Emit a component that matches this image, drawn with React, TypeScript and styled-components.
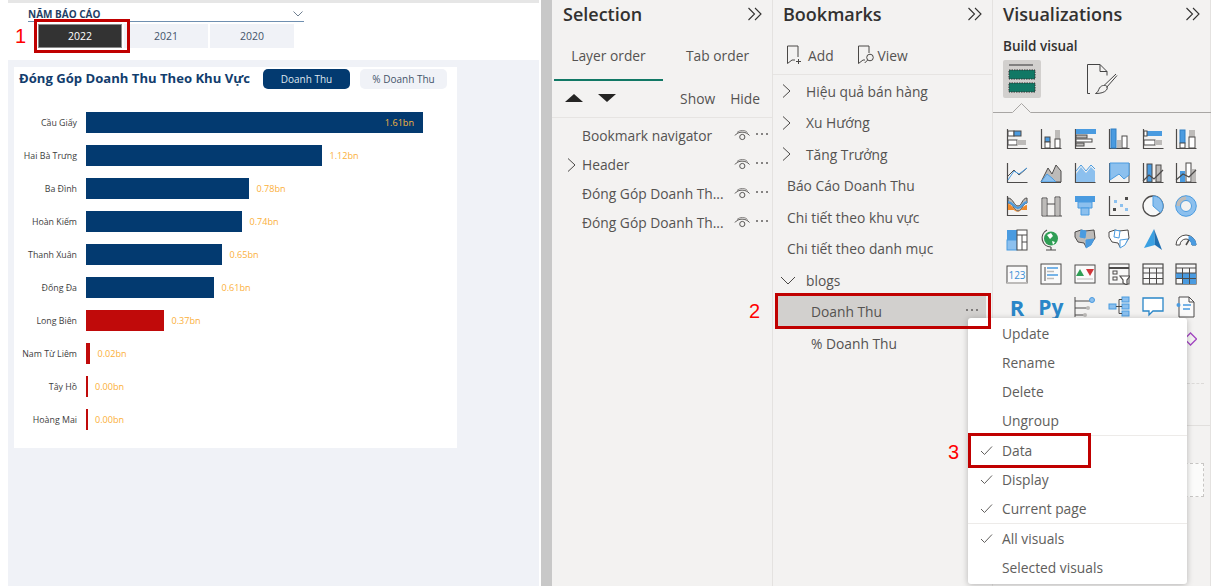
import React from 'react';
import styled, { createGlobalStyle } from 'styled-components';

const GlobalStyle = createGlobalStyle`
  html, body {
    margin: 0;
    padding: 0;
    background: #fff;
    font-family: "Open Sans", "Liberation Sans", sans-serif;
  }
  * { box-sizing: border-box; }
`;

const Page = styled.div`
  position: relative;
  width: 1211px;
  height: 586px;
  overflow: hidden;
  display: flex;
  background: #fff;
`;

/* ---------- report side ---------- */

const Report = styled.div`
  width: 541px;
  height: 586px;
  padding: 0 2px 0 8px;
  display: flex;
  flex-direction: column;
  flex-shrink: 0;
`;

const TopBand = styled.div`
  height: 3px;
  background: #e6e6e6;
`;

const SlicerBand = styled.div`
  height: 57px;
  padding: 5px 0 0 20px;
`;

const SlicerHead = styled.div`
  width: 276px;
  height: 14px;
  display: flex;
  justify-content: space-between;
  align-items: center;
  border-bottom: 1px solid #6f8fb0;
  color: #1f3f66;
  font-size: 10px;
  font-weight: 700;
  line-height: 12px;
  padding: 0 1px 2px 0;
`;

const YearRow = styled.div`
  display: flex;
  gap: 2px;
  margin: 2px 0 0 10px;
`;

const YearButton = styled.div<{ $on?: boolean }>`
  width: 84px;
  height: 24px;
  display: flex;
  align-items: center;
  justify-content: center;
  font-size: 10.5px;
  padding-bottom: 1px;
  color: ${(p) => (p.$on ? '#fff' : '#44546a')};
  background: ${(p) => (p.$on ? '#333' : '#f0f2f7')};
  border: ${(p) => (p.$on ? '1px solid #8a8a8a' : 'none')};
`;

const Canvas = styled.div`
  flex: 1;
  background: #f0f2f7;
  padding: 7px 0 0 6px;
`;

const ChartCard = styled.div`
  width: 443px;
  height: 381px;
  background: #fff;
`;

const ChartHead = styled.div`
  height: 39px;
  display: flex;
  align-items: flex-start;
  padding: 2px 0 0 5px;
`;

const ChartTitle = styled.div`
  width: 244px;
  color: #123d6d;
  font-size: 13.1px;
  font-weight: 700;
  line-height: 18px;
  white-space: nowrap;
`;

const Pill = styled.div<{ $on?: boolean }>`
  width: 87px;
  height: 20px;
  margin-right: 10px;
  border-radius: 5px;
  display: flex;
  align-items: center;
  justify-content: center;
  font-size: 10px;
  color: ${(p) => (p.$on ? '#dfe6ef' : '#44546a')};
  background: ${(p) => (p.$on ? '#033a70' : '#f0f2f7')};
`;

const BarList = styled.div`
  display: grid;
  row-gap: 12px;
  margin-top: 6px;
`;

const BarRow = styled.div`
  height: 21px;
  display: flex;
  align-items: center;
`;

const BarLabel = styled.div`
  width: 63px;
  margin-right: 9px;
  display: flex;
  justify-content: flex-end;
  color: #3d3d3d;
  font-size: 8.8px;
  white-space: nowrap;
`;

const Bar = styled.div<{ $red?: boolean; $inside?: boolean }>`
  height: 21px;
  flex-shrink: 0;
  background: ${(p) => (p.$red ? '#c00a0a' : '#033a70')};
  display: flex;
  align-items: center;
  justify-content: flex-end;
  padding-right: ${(p) => (p.$inside ? 9 : 0)}px;
`;

const BarValue = styled.span<{ $inside?: boolean }>`
  color: ${(p) => (p.$inside ? '#f5b63f' : '#fbb03b')};
  font-size: 9.1px;
  margin-left: ${(p) => (p.$inside ? 0 : 7.5)}px;
`;

const Gutter = styled.div`
  width: 11px;
  background: #c8c8c8;
  flex-shrink: 0;
`;

/* ---------- panes ---------- */

const Pane = styled.div<{ $w: number }>`
  width: ${(p) => p.$w}px;
  height: 586px;
  flex-shrink: 0;
  background: #f3f2f1;
  border-right: 1px solid #e4e2e0;
  color: #555351;
  font-size: 13.8px;
`;

const PaneHead = styled.div<{ $pad: number }>`
  height: 28px;
  padding: 0 9px 0 ${(p) => p.$pad}px;
  display: flex;
  align-items: center;
  justify-content: space-between;
`;

const PaneTitle = styled.div`
  color: #323130;
  font-size: 18px;
  font-weight: 600;
  line-height: 28px;
`;

const TabBar = styled.div`
  height: 44px;
  margin-top: 9px;
  padding-left: 2px;
  display: flex;
`;

const Tab = styled.div<{ $on?: boolean }>`
  width: 110px;
  height: 44px;
  padding-top: 9px;
  text-align: center;
  border-bottom: 2px solid ${(p) => (p.$on ? '#117865' : 'transparent')};
`;

const OrderRow = styled.div`
  height: 37px;
  display: flex;
  align-items: center;
  padding: 0 12px 2px 13px;
  border-bottom: 1px solid #e6e4e2;
`;

const Triangle = styled.div<{ $down?: boolean }>`
  width: 0;
  height: 0;
  margin: 0 15px 1px 0;
  border-left: 9px solid transparent;
  border-right: 9px solid transparent;
  border-${(p) => (p.$down ? 'top' : 'bottom')}: 8px solid #252423;
`;

const OrderAction = styled.div<{ $first?: boolean }>`
  margin-left: ${(p) => (p.$first ? 'auto' : '15px')};
`;

const LayerList = styled.div`
  padding-top: 3px;
`;

const LayerRow = styled.div`
  height: 29px;
  display: flex;
  align-items: center;
  padding: 0 4px 0 14px;
`;

const ChevronSlot = styled.div`
  width: 16px;
  display: flex;
  align-items: center;
  flex-shrink: 0;
`;

const LayerName = styled.div`
  width: 152px;
  white-space: nowrap;
`;

const Dots = styled.div<{ $gapRight?: number }>`
  display: flex;
  gap: 3px;
  margin-left: auto;
  margin-right: ${(p) => p.$gapRight ?? 0}px;
  padding-bottom: 3px;
  & > i {
    width: 2px;
    height: 2px;
    border-radius: 50%;
    background: #605e5c;
  }
`;

const BookmarkTools = styled.div`
  height: 38px;
  margin-top: 9px;
  display: flex;
  align-items: center;
  padding: 0 0 1px 13px;
  border-bottom: 1px solid #e6e4e2;
`;

const ToolLabel = styled.div<{ $gap: number; $after: number }>`
  margin: 0 ${(p) => p.$after}px 0 ${(p) => p.$gap}px;
`;

const BookmarkList = styled.div`
  padding-top: 0.5px;
`;

const BookmarkRow = styled.div<{ $indent: number; $on?: boolean }>`
  height: 31.5px;
  display: flex;
  align-items: center;
  padding-left: ${(p) => p.$indent}px;
  margin: 0 ${(p) => (p.$on ? '6px' : '0')} 0 ${(p) => (p.$on ? '5px' : '0')};
  background: ${(p) => (p.$on ? '#d2d0ce' : 'transparent')};
`;

const TreeChevron = styled.div`
  width: 25px;
  margin-left: 3px;
  display: flex;
  align-items: center;
`;

const BuildLabel = styled.div`
  margin: 9px 0 0 10px;
  height: 18px;
  color: #323130;
  font-size: 13.5px;
  font-weight: 600;
  line-height: 18px;
`;

const BuildTabs = styled.div`
  height: 38px;
  margin: 5px 0 0 10px;
  display: flex;
`;

const BuildActive = styled.div`
  width: 38px;
  height: 38px;
  background: #d2d0ce;
  border-radius: 2px;
  display: flex;
  align-items: center;
  justify-content: center;
`;

const BuildOther = styled.div`
  width: 38px;
  height: 38px;
  margin-left: 42px;
  display: flex;
  align-items: center;
  justify-content: center;
`;

const NotchLine = styled.div`
  height: 16px;
  line-height: 0;
`;

const IconGrid = styled.div`
  display: grid;
  grid-template-columns: repeat(6, 22px);
  grid-auto-rows: 22px;
  column-gap: 11.9px;
  row-gap: 11.7px;
  margin: 13px 0 0 13px;
  padding-top: 1px;
`;

const IconCell = styled.div<{ $col?: number }>`
  width: 22px;
  height: 22px;
  grid-column: ${(p) => p.$col ?? 'auto'};
`;

const ScriptIcon = styled.div<{ $size: number }>`
  width: 22px;
  height: 22px;
  display: flex;
  align-items: center;
  justify-content: center;
  color: #2a86c8;
  font-family: "Open Sans", sans-serif;
  font-weight: 700;
  font-size: ${(p) => p.$size}px;
  line-height: 22px;
`;

const DashLine = styled.div`
  margin-top: 31px;
  border-top: 1px dashed #dcdad8;
  margin-left: 194px;
  width: 17px;
`;

const SectionLine = styled.div`
  margin-top: 41px;
  border-top: 1px solid #e1dfdd;
`;

const DropBox = styled.div`
  width: 25px;
  height: 34px;
  margin: 37px 0 0 186px;
  background: #fbfbfa;
  border: 1px dashed #c8c6c4;
  border-left: none;
`;

/* ---------- overlays ---------- */

const Menu = styled.div`
  position: absolute;
  left: 968px;
  top: 318px;
  width: 219px;
  height: 266px;
  padding-top: 1px;
  background: #fff;
  border-radius: 3px;
  box-shadow: 0 1px 6px rgba(0, 0, 0, 0.25);
  color: #605e5c;
  font-size: 13.8px;
`;

const MenuRow = styled.div`
  height: 29px;
  display: flex;
  align-items: center;
`;

const CheckSlot = styled.div`
  width: 34px;
  padding-left: 12px;
  display: flex;
  align-items: center;
`;

const MenuRule = styled.div`
  height: 1px;
  background: #edebe9;
`;

const Callout = styled.div<{ $l: number; $t: number; $w: number; $h: number }>`
  position: absolute;
  left: ${(p) => p.$l}px;
  top: ${(p) => p.$t}px;
  width: ${(p) => p.$w}px;
  height: ${(p) => p.$h}px;
  border: 3px solid #c00000;
`;

const StepNumber = styled.div<{ $l: number; $t: number }>`
  position: absolute;
  left: ${(p) => p.$l}px;
  top: ${(p) => p.$t}px;
  color: #ff0000;
  font-family: "Liberation Sans", Arial, sans-serif;
  font-size: 20px;
  line-height: 24px;
`;

/* ---------- small drawings ---------- */

const Collapse = () => (
  <svg width="16" height="14" viewBox="0 0 16 14" fill="none" stroke="#323130" strokeWidth="1.1">
    <path d="M1.5 1l6 6-6 6M8 1l6 6-6 6" />
  </svg>
);

const Chevron = ({ down }: { down?: boolean }) => (
  <svg width="14" height="16" viewBox="0 0 14 16" fill="none" stroke="#4a4846" strokeWidth="1">
    {down ? <path d="M0 5l7 7 7-7" /> : <path d="M2 1.500l7 6.500-7 6.500" />}
  </svg>
);

const Eye = () => (
  <svg width="17" height="14" viewBox="0 0 17 14" fill="none" stroke="#5a5856" strokeWidth="1">
    <path d="M1 6.500C4 2 12 2 15.500 6.500" />
    <path d="M3 3.500C6 0.800 11 0.800 13.500 3.500" strokeWidth="0.7" />
    <circle cx="8.300" cy="8" r="2.600" />
  </svg>
);

const BookmarkAdd = () => (
  <svg width="16" height="20" viewBox="0 0 16 20" fill="none" stroke="#4a4846" strokeWidth="1">
    <path d="M12 12V1H1.500v17.500L6 15h3" />
    <path d="M10 16.500h5M12.500 14v5" />
  </svg>
);

const BookmarkView = () => (
  <svg width="18" height="20" viewBox="0 0 18 20" fill="none" stroke="#4a4846" strokeWidth="1">
    <path d="M12 8V1H1.500v17.500L6 15h2" />
    <circle cx="13" cy="12.500" r="3.300" />
    <path d="M10.700 15l-3 3" />
  </svg>
);

const Check = () => (
  <svg width="13" height="11" viewBox="0 0 13 11" fill="none" stroke="#605e5c" strokeWidth="1">
    <path d="M1 6l3.500 3.500L12 1.500" />
  </svg>
);

const BuildIcon = () => (
  <svg width="30" height="34" viewBox="0 0 30 34" fill="none">
    <path d="M2 3h24" stroke="#555" strokeWidth="1.300" />
    <rect x="2" y="8" width="26" height="9" fill="#117865" stroke="#333" strokeDasharray="1.500 1" />
    <rect x="2" y="21" width="26" height="9" fill="#117865" stroke="#333" strokeDasharray="1.500 1" />
  </svg>
);

const FormatIcon = () => (
  <svg width="32" height="32" viewBox="0 0 32 32" fill="none" stroke="#444" strokeWidth="1">
    <path d="M4 30.500H1.500V1.500h12.500l7 7v4M14 1.500v7h7" />
    <path d="M30 11L18 22.500M31 12.500L20.500 24.500" />
    <path d="M17.500 22.500c3-.5 5 1.500 3 4.500-2 2.500-6 3.500-11 3.500 3-1.500 2.500-3 4-5.500 1-1.500 2.500-2.500 4-2.500z" />
  </svg>
);

const Notch = () => (
  <svg width="218" height="16" viewBox="0 0 218 16" fill="none" stroke="#a8a6a4" strokeWidth="1">
    <path d="M0 14.500h19.500l9-9 9 9H218" />
  </svg>
);

const B = '#4a9be0';
const L = '#8cc0ee';
const G = '#bdbbb9';
const D = '#4d4b4a';

const Axis = () => <path d="M1.500 1v19.500H21.500" stroke={D} strokeWidth="1.200" fill="none" />;

const Drawing = ({ children }: { children: React.ReactNode }) => (
  <svg width="22" height="22" viewBox="0 0 22 22" fill="none" strokeWidth="1">
    {children}
  </svg>
);

const icons: React.ReactNode[] = [
  <><Axis /><rect x="2" y="3" width="6" height="5" fill="#fff" stroke={D} /><rect x="8" y="3" width="7" height="5" fill={B} stroke={D} /><rect x="2" y="12" width="9" height="5" fill="#fff" stroke={D} /><rect x="11" y="12" width="9" height="5" fill={G} /></>,
  <><Axis /><rect x="5" y="9" width="5" height="5" fill={B} stroke={D} /><rect x="5" y="14" width="5" height="6" fill="#fff" stroke={D} /><rect x="15" y="2" width="5" height="9" fill={G} /><rect x="15" y="11" width="5" height="9" fill="#fff" stroke={D} /></>,
  <><Axis /><rect x="2" y="1" width="20" height="5" fill={B} /><rect x="2" y="7" width="11" height="3" fill={G} stroke={D} /><rect x="2" y="11" width="16" height="3" fill="#fff" stroke={D} /><rect x="2" y="15" width="8" height="3" fill={G} stroke={D} /></>,
  <><Axis /><rect x="3" y="1" width="5" height="19" fill={B} stroke="#2f7fc4" /><rect x="9" y="12" width="4" height="8" fill={G} /><rect x="14" y="8" width="5" height="12" fill="#fff" stroke={D} /></>,
  <><Axis /><rect x="5" y="3" width="15" height="5" fill={B} /><rect x="2" y="3" width="3" height="5" fill="#fff" stroke={D} /><rect x="2" y="12" width="11" height="5" fill="#fff" stroke={D} /><rect x="13" y="12" width="7" height="5" fill={G} /></>,
  <><Axis /><rect x="5" y="2" width="5" height="13" fill={B} stroke="#2f7fc4" /><rect x="5" y="15" width="5" height="5" fill="#fff" stroke={D} /><rect x="14" y="2" width="6" height="7" fill={G} /><rect x="14" y="9" width="6" height="11" fill="#fff" stroke={D} /></>,

  <><Axis /><path d="M2 14l6-6 5 5 8-7" stroke={D} /><path d="M2 18l6-9 5 3 8-6" stroke={B} /></>,
  <><path d="M1 20L8 6l4 6 4-9 5 6v11z" fill={G} stroke={D} /><path d="M1 20l6-8 5 4 4 4z" fill={L} stroke={B} /><path d="M1 20.500h20" stroke={D} /></>,
  <><Axis /><path d="M2 12l5-7 5 6 5-6 4 4v11H2z" fill={L} /><path d="M2 9l5-6 5 6 5-6 4 4" stroke={B} /></>,
  <><path d="M1.500 1v19.500h19.500V1" stroke={D} /><path d="M2 1h19v12l-5 4-5-5-9 6z" fill={L} stroke={B} /></>,
  <><Axis /><rect x="5" y="2" width="5" height="18" fill={B} stroke={D} /><rect x="14" y="3" width="5" height="17" fill={G} stroke={D} /><path d="M1 19l6-6 5 4 9-9" stroke={D} strokeWidth="1.300" /></>,
  <><Axis /><rect x="5" y="9" width="5" height="11" fill={B} /><rect x="11" y="1" width="5" height="19" fill="#fff" stroke={D} /><rect x="17" y="7" width="4" height="13" fill={G} /><path d="M1 18l7-6 6 3 7-7" stroke={D} strokeWidth="1.300" /></>,

  <><Axis /><path d="M2 3c5 0 6 8 10 8s4-8 9-8v5c-4 0-5 8-9 8S7 8 2 8z" fill={G} stroke={D} /><path d="M2 9c4 0 6 7 10 7s5-6 9-6v5h-6c-2 2-5 2-7 0H2z" fill="#ef8a2b" /><path d="M2 7c5 0 6 6 10 6s5-6 9-6" stroke={B} strokeWidth="2" /></>,
  <><path d="M2 21V3h5v18M2 21h20" stroke={D} /><path d="M7 9h8V2h5v19M15 9v12" stroke={D} fill="none" /><rect x="3" y="4" width="3" height="16" fill={G} /><rect x="16" y="3" width="3" height="17" fill={G} /></>,
  <><path d="M1 1h20v6H1z" fill={B} /><path d="M4 7h14v6H4z" fill={L} stroke={B} /><path d="M7 13h8v7H7z" fill={L} stroke={B} /></>,
  <><Axis /><rect x="6" y="5" width="3" height="3" fill={L} /><rect x="12" y="9" width="3" height="3" fill={L} /><rect x="5" y="13" width="3" height="3" fill={D} /><rect x="17" y="2" width="3" height="3" fill={D} /><rect x="17" y="13" width="3" height="3" fill={L} /></>,
  <><circle cx="11" cy="11" r="10" fill="#f8f8f8" stroke={D} strokeWidth="1.300" /><path d="M11 11V1a10 10 0 0 1 7.500 16.600z" fill={L} stroke={B} /></>,
  <><circle cx="11" cy="11" r="8" stroke={L} strokeWidth="4.500" /><path d="M3 11a8 8 0 0 1 8-8" stroke={G} strokeWidth="4.500" /><circle cx="11" cy="11" r="10.300" stroke={B} /><circle cx="11" cy="11" r="5.500" stroke={B} /></>,

  <><rect x="1" y="1" width="10" height="10" fill={B} /><rect x="1" y="11" width="10" height="10" fill={L} stroke={B} /><rect x="11" y="1" width="10" height="20" fill="#fff" stroke={D} /><path d="M11 6h10M16 6v15M16 13h5" stroke={D} /></>,
  <><circle cx="11" cy="9.500" r="7" fill="#2f9e55" /><path d="M7 6l4-2 2 3-3 3zM12 12l3 1-2 3z" fill="#fff" /><path d="M7 1a9 9 0 0 0 4 17M11 18v3M6 21h10" stroke={D} strokeWidth="1.200" /></>,
  <><path d="M1 3l6-2 4 1 9-1 1 8-4 6-5 3-2-4-6-1-3-5z" fill={G} stroke={D} /><path d="M7 1l5 1-1 7-5-1zM12 11l8-1-3 6-5 3z" fill={B} stroke={B} /></>,
  <><path d="M1 3l6-2 4 1 9-1 1 8-4 6-5 3-2-4-6-1-3-5z" fill="#fff" stroke={D} /><path d="M7 1l5 1-1 7-5-1zM12 11l8-1-3 6-5 3z" fill="#fff" stroke={B} /></>,
  <><path d="M12 0L2 19l11-3z" fill="#3aa0e2" /><path d="M12 0l1 16 7 5z" fill="#1f6fb2" /></>,
  <><path d="M1 16a10 10 0 0 1 20 0h-4a6 6 0 0 0-12 0z" fill="#fff" stroke={D} /><path d="M14 7a10 10 0 0 1 7 9h-4a6 6 0 0 0-3-5z" fill={B} stroke={B} /><path d="M11 16l3-5" stroke={D} strokeWidth="1.500" /></>,

  <><rect x="1" y="3" width="20" height="17" fill="#fafafa" stroke={D} /><path d="M1 20h20" stroke={G} strokeWidth="2" /><text x="11" y="15.500" textAnchor="middle" fontSize="10" fontFamily="Open Sans, sans-serif" fill="#3a8fd6">123</text></>,
  <><rect x="1" y="1" width="20" height="20" fill="#fafafa" stroke={D} /><path d="M5 4v14" stroke={D} /><path d="M7 5h11" stroke={B} strokeWidth="1.500" /><path d="M7 8.500h7" stroke={G} strokeWidth="1.500" /><path d="M7 12h11" stroke={B} strokeWidth="1.500" /><path d="M7 15.500h7" stroke={G} strokeWidth="1.500" /></>,
  <><rect x="1" y="2" width="20" height="18" fill="#fafafa" stroke={D} /><path d="M6 6l4 7H2z" fill="#2f9e55" /><path d="M12 6h8l-4 7z" fill="#d13438" /><path d="M3 16h16" stroke={G} /></>,
  <><rect x="1" y="1" width="20" height="20" fill="#f8f8f8" stroke={D} /><path d="M1 5h20" stroke={D} strokeWidth="2" /><rect x="5" y="8" width="4" height="3" stroke={D} /><rect x="5" y="14" width="4" height="3" stroke={D} /><path d="M12 13h10l-3 4v5l-4-2v-3z" fill="#fff" stroke={D} strokeWidth="1.200" /></>,
  <><rect x="1" y="1" width="20" height="20" fill="#f8f8f8" stroke={D} strokeWidth="1.200" /><path d="M1 5h20M1 10h20M1 15.500h20M7.500 5v16M14.500 5v16" stroke={D} /></>,
  <><rect x="1" y="1" width="20" height="20" fill="#f8f8f8" stroke={D} strokeWidth="1.200" /><rect x="7" y="10" width="14" height="11" fill={B} /><rect x="1" y="10" width="6" height="6" fill={B} /><path d="M1 5h20M1 10h20M1 15.500h20M7.500 5v16M14.500 5v16" stroke={D} /></>,

  <ScriptIcon $size={22}>R</ScriptIcon>,
  <ScriptIcon $size={21}>Py</ScriptIcon>,
  <><path d="M1 1v20" stroke={D} /><path d="M1 5h15M1 12h12M1 19h9" stroke={D} /><circle cx="18" cy="4" r="2.500" fill={L} stroke={B} /><circle cx="14" cy="12" r="2" fill={G} /><circle cx="11" cy="19" r="2" fill={G} /></>,
  <><rect x="1" y="8" width="7" height="5" fill={L} stroke={B} /><rect x="14" y="1" width="7" height="5" fill={L} stroke={B} /><rect x="14" y="8" width="7" height="5" fill={L} stroke={B} /><rect x="14" y="15" width="7" height="5" fill={L} stroke={B} /><path d="M8 10.500h6M11 3.500v14M11 3.500h3M11 17.500h3" stroke={D} /></>,
  <path d="M1 2h20v13H11l-4 4v-4H1z" fill="#fff" stroke="#2a86c8" strokeWidth="1.300" />,
  <><path d="M4 1h10l5 5v15H4z" fill="#fafafa" stroke={D} /><path d="M14 1v5h5" stroke={D} /><circle cx="3.500" cy="9" r="2" fill={B} /><path d="M8 9h8M8 13h7" stroke={B} strokeWidth="1.300" /></>,
];

const diamond = <path d="M21.500 9l-6-6-6 6 6 6z" stroke="#a347c2" strokeWidth="1.300" />;

/* ---------- data ---------- */

const regions = [
  { name: 'Cầu Giấy', width: 337, value: '1.61bn', inside: true },
  { name: 'Hai Bà Trưng', width: 236, value: '1.12bn' },
  { name: 'Ba Đình', width: 163, value: '0.78bn' },
  { name: 'Hoàn Kiếm', width: 156, value: '0.74bn' },
  { name: 'Thanh Xuân', width: 136, value: '0.65bn' },
  { name: 'Đống Đa', width: 128, value: '0.61bn' },
  { name: 'Long Biên', width: 78, value: '0.37bn', red: true },
  { name: 'Nam Từ Liêm', width: 4, value: '0.02bn', red: true },
  { name: 'Tây Hồ', width: 1.5, value: '0.00bn', red: true },
  { name: 'Hoàng Mai', width: 1.5, value: '0.00bn', red: true },
];

const layers = ['Bookmark navigator', 'Header', 'Đóng Góp Doanh Th...', 'Đóng Góp Doanh Th...'];

const bookmarks = [
  { text: 'Hiệu quả bán hàng', tree: 'right' },
  { text: 'Xu Hướng', tree: 'right' },
  { text: 'Tăng Trưởng', tree: 'right' },
  { text: 'Báo Cáo Doanh Thu' },
  { text: 'Chi tiết theo khu vực' },
  { text: 'Chi tiết theo danh mục' },
  { text: 'blogs', tree: 'down' },
];

function App() {
  return (
    <Page>
      <GlobalStyle />

      <Report>
        <TopBand />
        <SlicerBand>
          <SlicerHead>
            NĂM BÁO CÁO
            <svg width="10" height="6" viewBox="0 0 10 6" fill="none" stroke="#6f7f90" strokeWidth="1">
              <path d="M0.500 0.500L5 5l4.500-4.500" />
            </svg>
          </SlicerHead>
          <YearRow>
            <YearButton $on>2022</YearButton>
            <YearButton>2021</YearButton>
            <YearButton>2020</YearButton>
          </YearRow>
        </SlicerBand>
        <Canvas>
          <ChartCard>
            <ChartHead>
              <ChartTitle>Đóng Góp Doanh Thu Theo Khu Vực</ChartTitle>
              <Pill $on>Doanh Thu</Pill>
              <Pill>% Doanh Thu</Pill>
            </ChartHead>
            <BarList>
              {regions.map((r) => (
                <BarRow key={r.name}>
                  <BarLabel>{r.name}</BarLabel>
                  <Bar $red={r.red} $inside={r.inside} style={{ width: r.width }}>
                    {r.inside && <BarValue $inside>{r.value}</BarValue>}
                  </Bar>
                  {!r.inside && <BarValue>{r.value}</BarValue>}
                </BarRow>
              ))}
            </BarList>
          </ChartCard>
        </Canvas>
      </Report>

      <Gutter />

      <Pane $w={221}>
        <PaneHead $pad={11}>
          <PaneTitle>Selection</PaneTitle>
          <Collapse />
        </PaneHead>
        <TabBar>
          <Tab $on>Layer order</Tab>
          <Tab>Tab order</Tab>
        </TabBar>
        <OrderRow>
          <Triangle />
          <Triangle $down />
          <OrderAction $first>Show</OrderAction>
          <OrderAction>Hide</OrderAction>
        </OrderRow>
        <LayerList>
          {layers.map((name, i) => (
            <LayerRow key={i}>
              <ChevronSlot>{name === 'Header' && <Chevron />}</ChevronSlot>
              <LayerName>{name}</LayerName>
              <Eye />
              <Dots><i /><i /><i /></Dots>
            </LayerRow>
          ))}
        </LayerList>
      </Pane>

      <Pane $w={220}>
        <PaneHead $pad={10}>
          <PaneTitle>Bookmarks</PaneTitle>
          <Collapse />
        </PaneHead>
        <BookmarkTools>
          <BookmarkAdd />
          <ToolLabel $gap={6} $after={23}>Add</ToolLabel>
          <BookmarkView />
          <ToolLabel $gap={3} $after={0}>View</ToolLabel>
        </BookmarkTools>
        <BookmarkList>
          {bookmarks.map((b) => (
            <BookmarkRow key={b.text} $indent={b.tree ? 5 : 14}>
              {b.tree && <TreeChevron><Chevron down={b.tree === 'down'} /></TreeChevron>}
              {b.text}
            </BookmarkRow>
          ))}
          <BookmarkRow $indent={33} $on>
            Doanh Thu
            <Dots $gapRight={8}><i /><i /><i /></Dots>
          </BookmarkRow>
          <BookmarkRow $indent={38}>% Doanh Thu</BookmarkRow>
        </BookmarkList>
      </Pane>

      <Pane $w={218}>
        <PaneHead $pad={10}>
          <PaneTitle>Visualizations</PaneTitle>
          <Collapse />
        </PaneHead>
        <BuildLabel>Build visual</BuildLabel>
        <BuildTabs>
          <BuildActive><BuildIcon /></BuildActive>
          <BuildOther><FormatIcon /></BuildOther>
        </BuildTabs>
        <NotchLine><Notch /></NotchLine>
        <IconGrid>
          {icons.map((icon, i) => (
            <IconCell key={i}>
              {i === 30 || i === 31 ? icon : <Drawing>{icon}</Drawing>}
            </IconCell>
          ))}
          <IconCell $col={6}><Drawing>{diamond}</Drawing></IconCell>
        </IconGrid>
        <DashLine />
        <SectionLine />
        <DropBox />
      </Pane>

      <Menu>
        {['Update', 'Rename', 'Delete', 'Ungroup'].map((t) => (
          <MenuRow key={t}><CheckSlot />{t}</MenuRow>
        ))}
        <MenuRule />
        {['Data', 'Display', 'Current page'].map((t) => (
          <MenuRow key={t}><CheckSlot><Check /></CheckSlot>{t}</MenuRow>
        ))}
        <MenuRule />
        <MenuRow><CheckSlot><Check /></CheckSlot>All visuals</MenuRow>
        <MenuRow><CheckSlot />Selected visuals</MenuRow>
      </Menu>

      <Callout $l={34} $t={19} $w={96} $h={34} />
      <Callout $l={775} $t={293} $w={216} $h={36} />
      <Callout $l={968} $t={433} $w={123} $h={35} />
      <StepNumber $l={15} $t={24}>1</StepNumber>
      <StepNumber $l={749} $t={299}>2</StepNumber>
      <StepNumber $l={948} $t={440}>3</StepNumber>
    </Page>
  );
}

export default App;
